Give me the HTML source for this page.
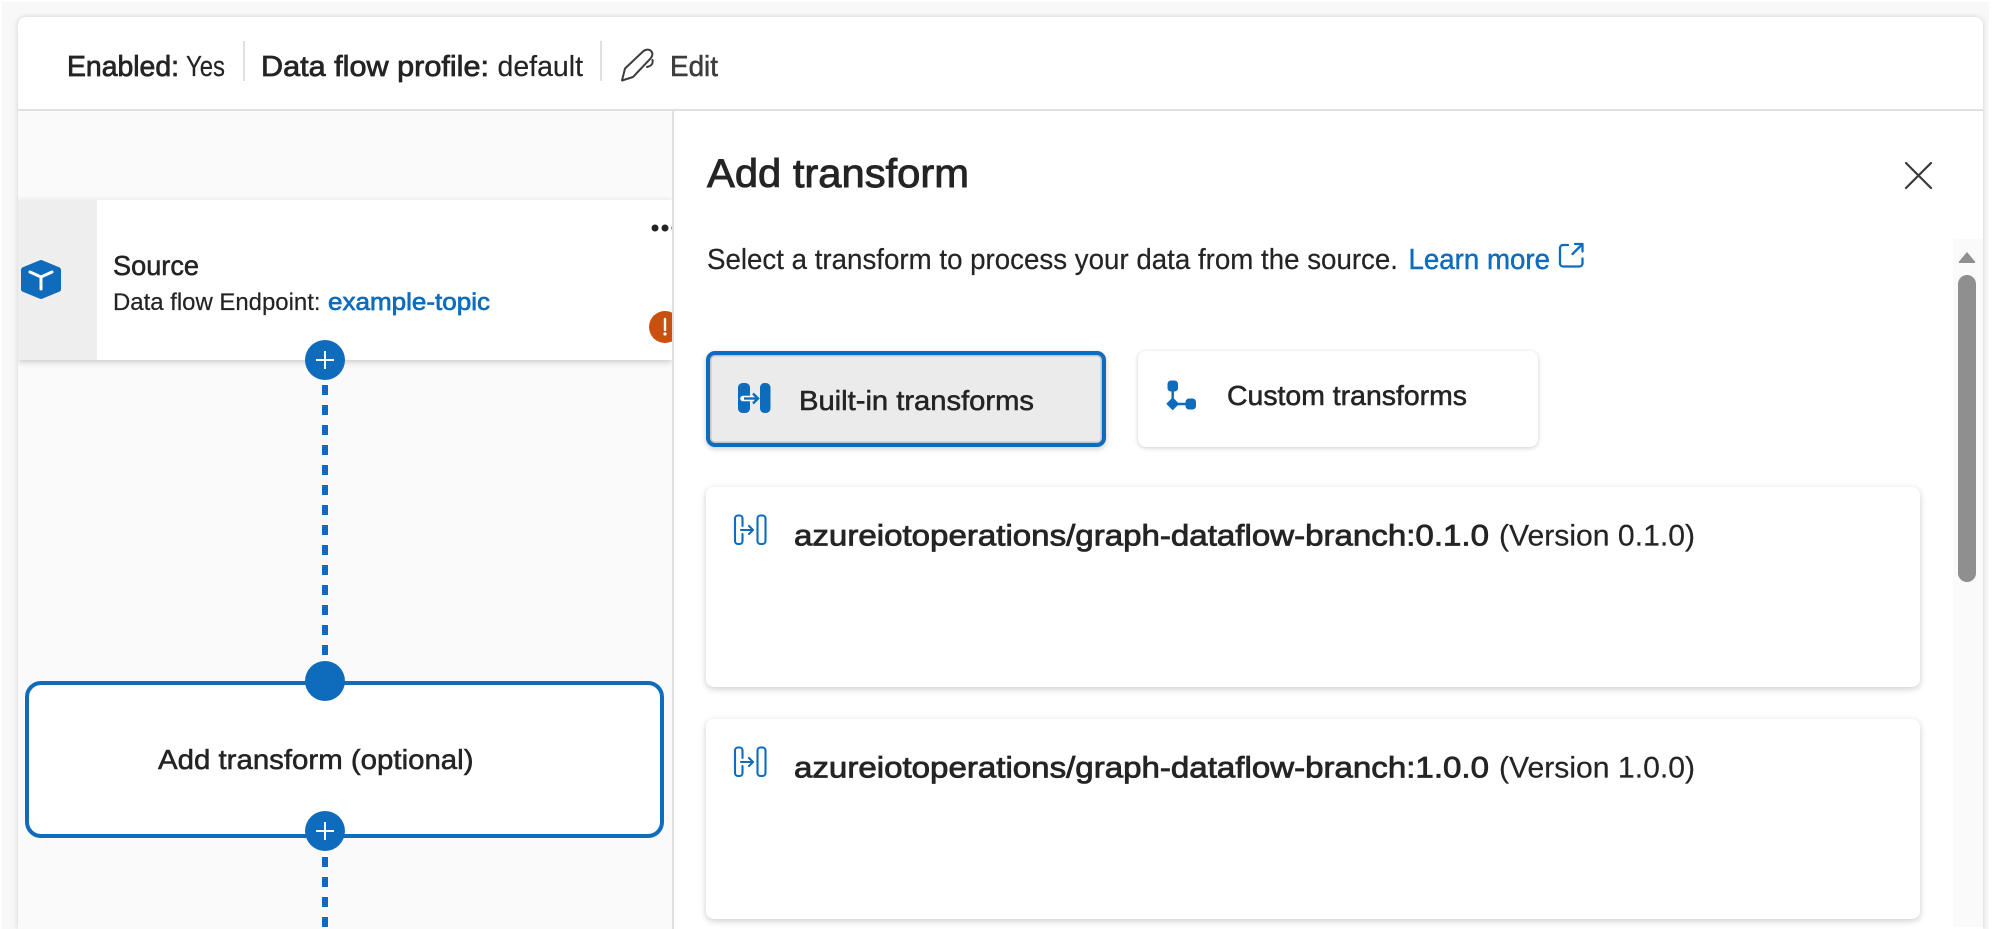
<!DOCTYPE html>
<html lang="en">
<head>
<meta charset="utf-8">
<title>Add transform</title>
<style>
html,body{margin:0;padding:0;width:1992px;height:929px;overflow:hidden;background:#fff}
body{position:relative;font-family:"Liberation Sans",sans-serif;color:#242424}
.a{position:absolute;box-sizing:border-box}
svg{position:absolute;left:0;top:0}
text{font-family:"Liberation Sans",sans-serif;fill:#242424;stroke:#242424;stroke-width:.2px}
.s{stroke-width:.75px}
.l{fill:#0f6cbd;stroke:#0f6cbd}
</style>
</head>
<body>
<div class="a" style="left:2px;top:2px;width:1987px;height:927px;background:#f8f8f8"></div>
<div class="a" style="left:18px;top:17px;width:1965px;height:912px;background:#fff;border-radius:8px 8px 0 0;box-shadow:0 0 6px rgba(0,0,0,.16)"></div>
<div class="a" style="left:18px;top:109px;width:1965px;height:2px;background:#e0e0e0"></div>
<div class="a" style="left:18px;top:111px;width:654px;height:818px;background:#fafafa"></div>
<div class="a" style="left:672px;top:111px;width:2px;height:818px;background:#e0e0e0"></div>
<div class="a" style="left:18px;top:200px;width:654px;height:160px;background:#fff;box-shadow:0 2px 6px rgba(0,0,0,.2);clip-path:inset(-10px 0 -12px 0)"></div>
<div class="a" style="left:18px;top:200px;width:79px;height:160px;background:#eee"></div>
<div class="a" style="left:25px;top:681px;width:639px;height:157px;background:#fff;border:4px solid #0f6cbd;border-radius:16px"></div>
<div class="a" style="left:243px;top:41px;width:2px;height:40px;background:#e0e0e0"></div>
<div class="a" style="left:600px;top:41px;width:2px;height:40px;background:#e0e0e0"></div>
<div class="a" style="left:1953px;top:239px;width:30px;height:688px;background:#fafafa"></div>
<div class="a" style="left:1958px;top:275px;width:18px;height:307px;background:#8f8f8f;border-radius:9px"></div>
<div class="a" style="left:706px;top:351px;width:400px;height:96px;background:#ebebeb;border:4px solid #0f6cbd;border-radius:9px;box-shadow:0 2px 6px rgba(0,0,0,.2),inset 0 0 0 1.5px #c4c4c4"></div>
<div class="a" style="left:1138px;top:351px;width:400px;height:96px;background:#fff;border-radius:8px;box-shadow:0 1px 5px rgba(0,0,0,.2)"></div>
<div class="a" style="left:706px;top:487px;width:1214px;height:200px;background:#fff;border-radius:8px;box-shadow:0 2px 7px rgba(0,0,0,.2)"></div>
<div class="a" style="left:706px;top:719px;width:1214px;height:200px;background:#fff;border-radius:8px;box-shadow:0 2px 7px rgba(0,0,0,.2)"></div>

<svg width="1992" height="929" viewBox="0 0 1992 929" xmlns="http://www.w3.org/2000/svg">
  <defs><clipPath id="c"><rect x="18" y="200" width="654" height="170"/></clipPath></defs>
  <!-- header -->
  <text class="s" x="67" y="76" font-size="28.500" textLength="112" lengthAdjust="spacingAndGlyphs">Enabled:</text>
  <text x="186" y="76" font-size="28.500" textLength="39" lengthAdjust="spacingAndGlyphs">Yes</text>
  <text class="s" x="261" y="76" font-size="28.500" textLength="228" lengthAdjust="spacingAndGlyphs">Data flow profile:</text>
  <text x="497.500" y="76" font-size="28.500" textLength="85.500" lengthAdjust="spacingAndGlyphs">default</text>
  <g fill="none" stroke="#3d3d3d" stroke-width="2" stroke-linejoin="round" stroke-linecap="round">
    <path d="M622 80.500l3-12 18-17c2.500-2.300 6-2.600 8-.6 2 2 1.800 5-.4 7.500l-17.600 18.600z"/>
    <path d="M652.500 60c.8 3.500-1 6-5.500 7"/>
  </g>
  <text x="670" y="76" font-size="28.500" textLength="48" lengthAdjust="spacingAndGlyphs" style="fill:#3d3d3d;stroke:#3d3d3d;stroke-width:.5px">Edit</text>

  <!-- source card -->
  <path d="M24 270l17-7 17 7v19l-17 7-17-7z" fill="#0f6cbd" stroke="#0f6cbd" stroke-width="6" stroke-linejoin="round"/>
  <path d="M30 272l11 5 11-5M41 277v12" fill="none" stroke="#fff" stroke-width="3" stroke-linecap="round" stroke-linejoin="round"/>
  <text class="s" x="113" y="275" font-size="28" textLength="86" lengthAdjust="spacingAndGlyphs" style="stroke-width:.55px">Source</text>
  <text x="113" y="310" font-size="24" textLength="207.500" lengthAdjust="spacingAndGlyphs">Data flow Endpoint:</text>
  <text class="s l" x="328" y="310" font-size="24" textLength="162" lengthAdjust="spacingAndGlyphs" style="stroke-width:.7px">example-topic</text>
  <g clip-path="url(#c)">
    <circle cx="655" cy="228" r="3.500" fill="#242424"/>
    <circle cx="665" cy="228" r="3.500" fill="#242424"/>
    <circle cx="675" cy="228" r="3.500" fill="#242424"/>
    <circle cx="665" cy="327" r="16" fill="#ca5010"/>
    <path d="M665 319v11" stroke="#fff" stroke-width="2.400" stroke-linecap="round"/>
    <circle cx="665" cy="334" r="1.600" fill="#fff"/>
  </g>

  <!-- connector -->
  <path d="M325 385V655" stroke="#0f6cbd" stroke-width="6" stroke-dasharray="10 10" fill="none"/>
  <path d="M325 857V929" stroke="#0f6cbd" stroke-width="6" stroke-dasharray="10 10" fill="none"/>
  <circle cx="325" cy="360" r="20" fill="#0f6cbd"/>
  <path d="M325 351v18M316 360h18" stroke="#fff" stroke-width="2"/>
  <circle cx="325" cy="681" r="20" fill="#0f6cbd"/>
  <circle cx="325" cy="831" r="20" fill="#0f6cbd"/>
  <path d="M325 822v18M316 831h18" stroke="#fff" stroke-width="2"/>
  <text class="s" x="158" y="769" font-size="28" textLength="315.500" lengthAdjust="spacingAndGlyphs" style="stroke-width:.55px">Add transform (optional)</text>

  <!-- panel -->
  <text class="s" x="707" y="187" font-size="39.500" textLength="262" lengthAdjust="spacingAndGlyphs" style="stroke-width:.9px">Add transform</text>
  <path d="M1906 163l25 25M1931 163l-25 25" stroke="#3a3a3a" stroke-width="2.200" fill="none" stroke-linecap="round"/>
  <text x="707" y="269" font-size="28.500" textLength="691" lengthAdjust="spacingAndGlyphs">Select a transform to process your data from the source.</text>
  <text class="l" x="1408.500" y="269" font-size="28.500" textLength="141.500" lengthAdjust="spacingAndGlyphs" style="stroke-width:.45px">Learn more</text>
  <g fill="none" stroke="#0f6cbd" stroke-width="2.300" stroke-linecap="round" stroke-linejoin="round">
    <path d="M1568 245h-5a3 3 0 0 0-3 3v15.500a3 3 0 0 0 3 3h16.500a3 3 0 0 0 3-3v-5"/>
    <path d="M1575 244h7.500v7.500M1582 244.500l-9.500 9.500"/>
  </g>
  <path d="M1967 252l7.500 9a1 1 0 0 1-.8 2h-13.400a1 1 0 0 1-.8-2z" fill="#8f8f8f"/>

  <!-- tab buttons -->
  <rect x="738" y="383" width="12" height="30" rx="4.500" fill="#0f6cbd"/>
  <rect x="760" y="383" width="10.500" height="30" rx="4.500" fill="#0f6cbd"/>
  <path d="M743 398.500h8" stroke="#fff" stroke-width="5.500" stroke-linecap="round"/>
  <path d="M744 398.500h12.500" stroke="#0f6cbd" stroke-width="2.400"/>
  <path d="M753 393.500l5 5-5 5" stroke="#0f6cbd" stroke-width="2.400" fill="none"/>
  <text class="s" x="799" y="410" font-size="28" textLength="235" lengthAdjust="spacingAndGlyphs" style="stroke-width:.55px">Built-in transforms</text>

  <path d="M1172.700 386V404H1190" stroke="#0f6cbd" stroke-width="2.500" fill="none"/>
  <rect x="1167.500" y="380.500" width="10.500" height="11" rx="3.500" fill="#0f6cbd"/>
  <path d="M1172.700 398l5.800 5.800-5.800 5.800-5.800-5.800z" fill="#0f6cbd" stroke="#0f6cbd" stroke-linejoin="round"/>
  <rect x="1185.500" y="398.500" width="10.500" height="11" rx="3.500" fill="#0f6cbd"/>
  <text class="s" x="1227" y="405" font-size="28" textLength="240" lengthAdjust="spacingAndGlyphs" style="stroke-width:.55px">Custom transforms</text>

  <!-- cards -->
  <g fill="none" stroke="#0f6cbd" stroke-width="2.100" stroke-linecap="round" stroke-linejoin="round">
    <path d="M742.500 526v-7.500a3 3 0 0 0-3-3h-1.500a3 3 0 0 0-3 3v22.500a3 3 0 0 0 3 3h1.500a3 3 0 0 0 3-3v-7"/>
    <rect x="757.500" y="515.500" width="8" height="28.500" rx="3"/>
    <path d="M741 530h12M749 526l4 4-4 4"/>
    <g transform="translate(0 232)">
      <path d="M742.500 526v-7.500a3 3 0 0 0-3-3h-1.500a3 3 0 0 0-3 3v22.500a3 3 0 0 0 3 3h1.500a3 3 0 0 0 3-3v-7"/>
      <rect x="757.500" y="515.500" width="8" height="28.500" rx="3"/>
      <path d="M741 530h12M749 526l4 4-4 4"/>
    </g>
  </g>
  <text class="s" x="794" y="545.500" font-size="30" textLength="695" lengthAdjust="spacingAndGlyphs" style="stroke-width:.8px">azureiotoperations/graph-dataflow-branch:0.1.0</text>
  <text x="1499" y="545.500" font-size="30" textLength="196" lengthAdjust="spacingAndGlyphs">(Version 0.1.0)</text>
  <text class="s" x="794" y="777.500" font-size="30" textLength="695" lengthAdjust="spacingAndGlyphs" style="stroke-width:.8px">azureiotoperations/graph-dataflow-branch:1.0.0</text>
  <text x="1499" y="777.500" font-size="30" textLength="196" lengthAdjust="spacingAndGlyphs">(Version 1.0.0)</text>
</svg>
</body>
</html>
